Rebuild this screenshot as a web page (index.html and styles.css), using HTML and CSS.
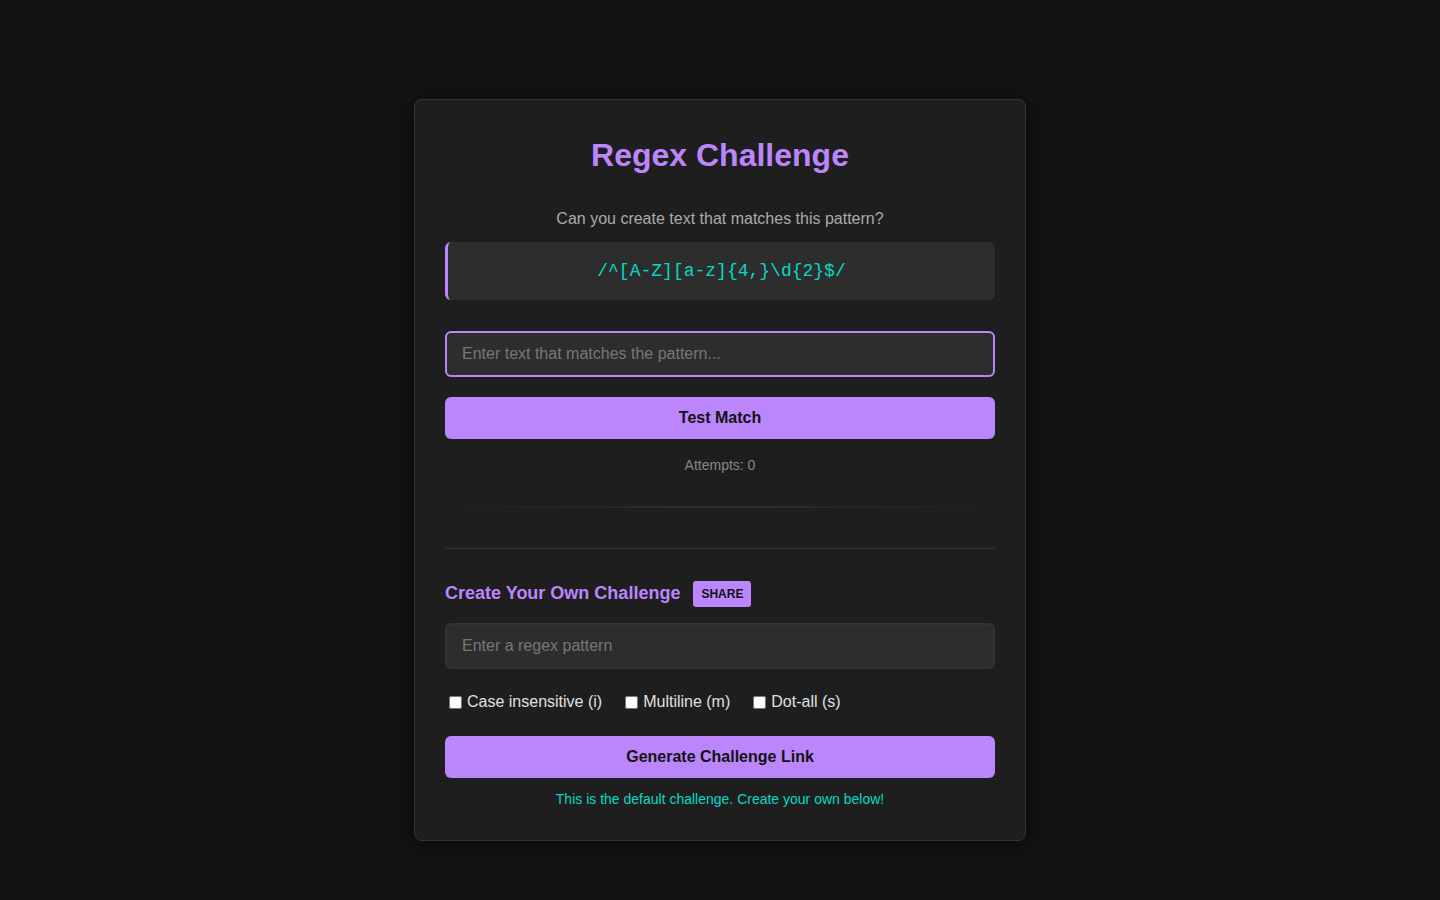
FILE: index.html
```html
<!DOCTYPE html>
<html>
<head>
  <meta charset="UTF-8">
  <title>Regex Challenge</title>
  <link rel="stylesheet" href="styles.css">
</head>
<body>
  <div class="container">
    <h1>Regex Challenge</h1>

    <!-- Current challenge -->
    <p class="prompt">Can you create text that matches this pattern?</p>
    <div class="pattern-box">/^[A-Z][a-z]{4,}\d{2}$/</div>

    <input type="text" class="text-input active-input" placeholder="Enter text that matches the pattern...">
    <button class="btn-primary test-btn">Test Match</button>
    <div class="attempts">Attempts: 0</div>

    <div class="fade-line"></div>

    <!-- Create your own -->
    <div class="create-section">
      <div class="create-header">
        <h2>Create Your Own Challenge</h2>
        <span class="badge">SHARE</span>
      </div>

      <input type="text" class="text-input" placeholder="Enter a regex pattern">

      <div class="flags">
        <label><input type="checkbox"> Case insensitive (i)</label>
        <label><input type="checkbox"> Multiline (m)</label>
        <label><input type="checkbox"> Dot-all (s)</label>
      </div>

      <button class="btn-primary generate-btn">Generate Challenge Link</button>
      <div class="message">This is the default challenge. Create your own below!</div>
    </div>
  </div>
</body>
</html>
```

FILE: styles.css
```css
body {
  margin: 0;
  padding: 99px 0 40px;
  background-color: #121212;
  color: #e0e0e0;
  font-family: 'Liberation Sans', Arial, sans-serif;
}

.container {
  width: 550px;
  margin: 0 auto;
  padding: 30px;
  background-color: #1e1e1e;
  border: 1px solid #333;
  border-radius: 8px;
  box-shadow: 0 4px 20px rgba(0, 0, 0, 0.4);
}

h1 {
  font-size: 32px;
  line-height: 37px;
  color: #bb86fc;
  text-align: center;
  margin: 7px 0 36px;
}

.prompt {
  font-size: 16px;
  line-height: 18px;
  color: #aaa;
  text-align: center;
  margin: 0 0 14px;
}

/* Pattern */
.pattern-box {
  background-color: #2d2d2d;
  border-left: 3px solid #bb86fc;
  border-radius: 6px;
  padding: 18px;
  font-family: 'Liberation Mono', 'Courier New', monospace;
  font-size: 18px;
  line-height: 22px;
  color: #03dac6;
  text-align: center;
  margin-bottom: 31px;
}

/* Inputs */
.text-input {
  display: block;
  width: 100%;
  box-sizing: border-box;
  padding: 12px 15px;
  font-family: inherit;
  font-size: 16px;
  line-height: 18px;
  color: #e0e0e0;
  background-color: #2d2d2d;
  border: 2px solid #333;
  border-radius: 6px;
  outline: none;
}

.text-input::placeholder {
  color: #777;
}

.active-input {
  border-color: #bb86fc;
}

/* Buttons */
.btn-primary {
  display: block;
  width: 100%;
  padding: 12px;
  font-family: inherit;
  font-size: 16px;
  line-height: 18px;
  font-weight: 700;
  color: #121212;
  background-color: #bb86fc;
  border: none;
  border-radius: 6px;
  cursor: pointer;
}

.btn-primary:hover {
  background-color: #a370f7;
}

.test-btn {
  margin-top: 20px;
}

.attempts {
  font-size: 14px;
  line-height: 16px;
  color: #888;
  text-align: center;
  margin-top: 18px;
}

.fade-line {
  height: 2px;
  margin: 33px 0 40px;
  background: linear-gradient(to right, transparent, #2e2e2e, transparent);
}

/* Create section */
.create-section {
  border-top: 1px solid #333;
  padding-top: 32px;
}

.create-header {
  display: flex;
  align-items: center;
  gap: 13px;
  margin-bottom: 16px;
}

.create-header h2 {
  font-size: 18px;
  line-height: 20px;
  color: #bb86fc;
  margin: 0 0 2px;
}

.badge {
  background-color: #bb86fc;
  color: #121212;
  font-size: 12px;
  font-weight: 700;
  line-height: 14px;
  padding: 6px 8px;
  border-radius: 3px;
}

.flags {
  display: flex;
  gap: 19px;
  margin-top: 23px;
  font-size: 16px;
  line-height: 20px;
}

.flags label {
  display: flex;
  align-items: center;
  cursor: pointer;
}

.flags input {
  margin: 3px 5px 3px 4px;
}

.generate-btn {
  margin-top: 24px;
}

.message {
  font-size: 14px;
  line-height: 16px;
  color: #03dac6;
  text-align: center;
  margin: 13px 0 3px;
}
```
